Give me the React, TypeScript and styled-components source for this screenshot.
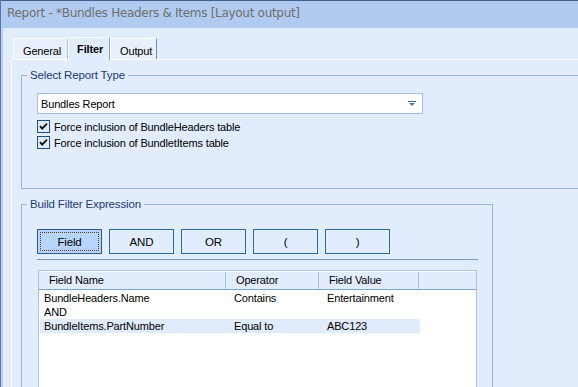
import React, { FC } from "react";
import styled, { createGlobalStyle } from "styled-components";

const GlobalStyle = createGlobalStyle`
  html, body {
    margin: 0;
    padding: 0;
    background: #e1ecfd;
  }
  body {
    font-family: "Liberation Sans", Arial, sans-serif;
    font-size: 11px;
    letter-spacing: -0.15px;
  }
`;

const tabs = ["General", "Filter", "Output"];
const buttons = ["Field", "AND", "OR", "(", ")"];

const columns = [
  { title: "Field Name", width: 187 },
  { title: "Operator", width: 93 },
  { title: "Field Value", width: 100 },
];

const rows = [
  { cells: ["BundleHeaders.Name", "Contains", "Entertainment"], selected: false },
  { cells: ["AND", "", ""], selected: false },
  { cells: ["BundleItems.PartNumber", "Equal to", "ABC123"], selected: true },
];

const CheckIcon: FC = () => (
  <svg width="13" height="13" viewBox="0 0 13 13">
    <rect x="0.5" y="0.5" width="12" height="12" fill="#dfe9f8" stroke="#1c5180" />
    <path d="M3 6.2 L5.2 8.6 L10 3.6" fill="none" stroke="#111" strokeWidth="1.8" />
  </svg>
);

const DropArrow: FC = () => (
  <svg width="8" height="6" viewBox="0 0 8 6">
    <rect x="0" y="0" width="8" height="1" fill="#3d5f9d" />
    <path d="M1 2 H7 L4 5 Z" fill="#5676b8" />
  </svg>
);

export default function App() {
  return (
    <>
      <GlobalStyle />
      <Window>
        <TitleBar>Report - *Bundles Headers &amp; Items [Layout output]</TitleBar>
        <Body>
          <TabStrip>
            {tabs.map(t => (
              <Tab key={t} $active={t === "Filter"}>
                {t}
              </Tab>
            ))}
          </TabStrip>
          <Panel>
            <GroupBox $height={121} $width={640}>
              <Legend>Select Report Type</Legend>
              <Combo>
                <span>Bundles Report</span>
                <DropArrow />
              </Combo>
              <CheckList>
                <CheckRow>
                  <CheckIcon />
                  <span>Force inclusion of BundleHeaders table</span>
                </CheckRow>
                <CheckRow>
                  <CheckIcon />
                  <span>Force inclusion of BundletItems table</span>
                </CheckRow>
              </CheckList>
            </GroupBox>
            <GroupBox $height={220} $width={472}>
              <Legend>Build Filter Expression</Legend>
              <ButtonRow>
                {buttons.map(b => (
                  <ExprButton key={b} $pressed={b === "Field"}>
                    {b === "Field" ? <FocusRect>{b}</FocusRect> : b}
                  </ExprButton>
                ))}
              </ButtonRow>
              <Separator />
              <ListView>
                <HeaderRow>
                  {columns.map(c => (
                    <HeaderCell key={c.title} style={{ width: c.width }}>
                      {c.title}
                    </HeaderCell>
                  ))}
                  <HeaderFill />
                </HeaderRow>
                {rows.map((r, i) => (
                  <Row key={i} $selected={r.selected}>
                    {r.cells.map((c, j) => (
                      <Cell key={j} $first={j === 0} style={{ width: columns[j].width }}>
                        {c}
                      </Cell>
                    ))}
                  </Row>
                ))}
              </ListView>
            </GroupBox>
          </Panel>
        </Body>
      </Window>
    </>
  );
}

const Window = styled.div`
  width: 578px;
  height: 387px;
  overflow: hidden;
  background: #e1ecfd;
  border-left: 1px solid #5877ad;
  box-sizing: border-box;
  display: flex;
  flex-direction: column;
`;

const TitleBar = styled.div`
  height: 28px;
  flex-shrink: 0;
  box-sizing: border-box;
  background: #b1cbf0;
  border-top: 1px solid #3f5f8f;
  padding: 5px 0 0 6px;
  font-family: "DejaVu Sans", Verdana, sans-serif;
  font-size: 12px;
  letter-spacing: -0.3px;
  color: #6e6e6e;
  white-space: nowrap;
`;

const Body = styled.div`
  flex: 1;
  padding: 9px 0 0 8px;
  border-left: 2px solid #b9d0f2;
  display: flex;
  flex-direction: column;
`;

const TabStrip = styled.div`
  display: flex;
  align-items: flex-end;
  height: 22px;
  padding-left: 2px;
  position: relative;
  z-index: 1;
`;

const Tab = styled.div<{ $active?: boolean }>`
  box-sizing: border-box;
  height: ${p => (p.$active ? 23 : 21)}px;
  margin-bottom: ${p => (p.$active ? -1 : 0)}px;
  padding: ${p => (p.$active ? "5px 6px 0 8px" : "6px 6px 0 9px")};
  background: ${p => (p.$active ? "#e1ecfd" : "#e8f0fd")};
  border-top: 1px solid #ffffff;
  border-left: 1px solid #ffffff;
  border-right: 1px solid ${p => (p.$active ? "#7f9fce" : "#aac2e4")};
  font-weight: ${p => (p.$active ? "bold" : "normal")};
  color: #000;
  white-space: nowrap;
  &:last-child {
    border-right-color: #6e8fc4;
    padding-right: 4px;
  }
`;

const Panel = styled.div`
  flex: 1;
  border-top: 1px solid #ffffff;
  border-left: 1px solid #ffffff;
  padding-left: 9px;
  display: flex;
  flex-direction: column;
`;

const GroupBox = styled.fieldset<{ $height: number; $width: number }>`
  box-sizing: border-box;
  flex-shrink: 0;
  margin: 8px 0 0 0;
  width: ${p => p.$width}px;
  height: ${p => p.$height}px;
  padding: 8px 0 0 15px;
  border: 1px solid #98b5e2;
  min-width: 0;
`;

const Legend = styled.legend`
  margin-left: -10px;
  padding: 0 3px;
  color: #1c3a73;
  font-size: 11.5px;
  line-height: 14px;
`;

const Combo = styled.div`
  box-sizing: border-box;
  width: 386px;
  height: 21px;
  margin-top: 3px;
  background: #ffffff;
  border: 1px solid #a7bcdc;
  display: flex;
  align-items: center;
  justify-content: space-between;
  padding: 0 6px 0 3px;
  color: #000;
`;

const CheckList = styled.div`
  display: flex;
  flex-direction: column;
  gap: 3px;
  margin-top: 6px;
`;

const CheckRow = styled.div`
  display: flex;
  align-items: center;
  gap: 4px;
  height: 13px;
  color: #000;
  svg {
    flex-shrink: 0;
  }
`;

const ButtonRow = styled.div`
  display: flex;
  gap: 7px;
  margin-top: 10px;
`;

const ExprButton = styled.div<{ $pressed?: boolean }>`
  box-sizing: border-box;
  width: 65px;
  height: 25px;
  border: 1px solid ${p => (p.$pressed ? "#2c5a8c" : "#2f6aa5")};
  background: ${p => (p.$pressed ? "#b7d4fb" : "#e1ecfd")};
  display: flex;
  align-items: center;
  justify-content: center;
  padding: 2px;
  font-size: 11.5px;
  color: #000;
`;

const FocusRect = styled.div`
  flex: 1;
  align-self: stretch;
  display: flex;
  align-items: center;
  justify-content: center;
  border: 1px dotted #5a3a1a;
`;

const Separator = styled.div`
  width: 441px;
  height: 1px;
  margin-top: 5px;
  background: #7f9ab9;
`;

const ListView = styled.div`
  box-sizing: border-box;
  width: 439px;
  height: 140px;
  margin: 10px 0 0 1px;
  background: #ffffff;
  border: 1px solid #a9c2e6;
`;

const HeaderRow = styled.div`
  display: flex;
  height: 17px;
  background: #e1ecfd;
  border-bottom: 1px solid #7fa3d6;
  border-top: 1px solid #ffffff;
`;

const HeaderCell = styled.div`
  box-sizing: border-box;
  flex-shrink: 0;
  padding: 2px 0 0 10px;
  border-right: 1px solid #a7c0e6;
  color: #000;
  white-space: nowrap;
`;

const HeaderFill = styled.div`
  flex: 1;
`;

const Row = styled.div<{ $selected?: boolean }>`
  display: flex;
  height: 14px;
  margin-left: 1px;
  width: fit-content;
  background: ${p => (p.$selected ? "#e0ebfc" : "transparent")};
  &:nth-child(2) {
    margin-top: 1px;
  }
`;

const Cell = styled.div<{ $first?: boolean }>`
  box-sizing: border-box;
  flex-shrink: 0;
  padding-left: ${p => (p.$first ? 4 : 7)}px;
  line-height: 14px;
  color: #000;
  white-space: nowrap;
`;
